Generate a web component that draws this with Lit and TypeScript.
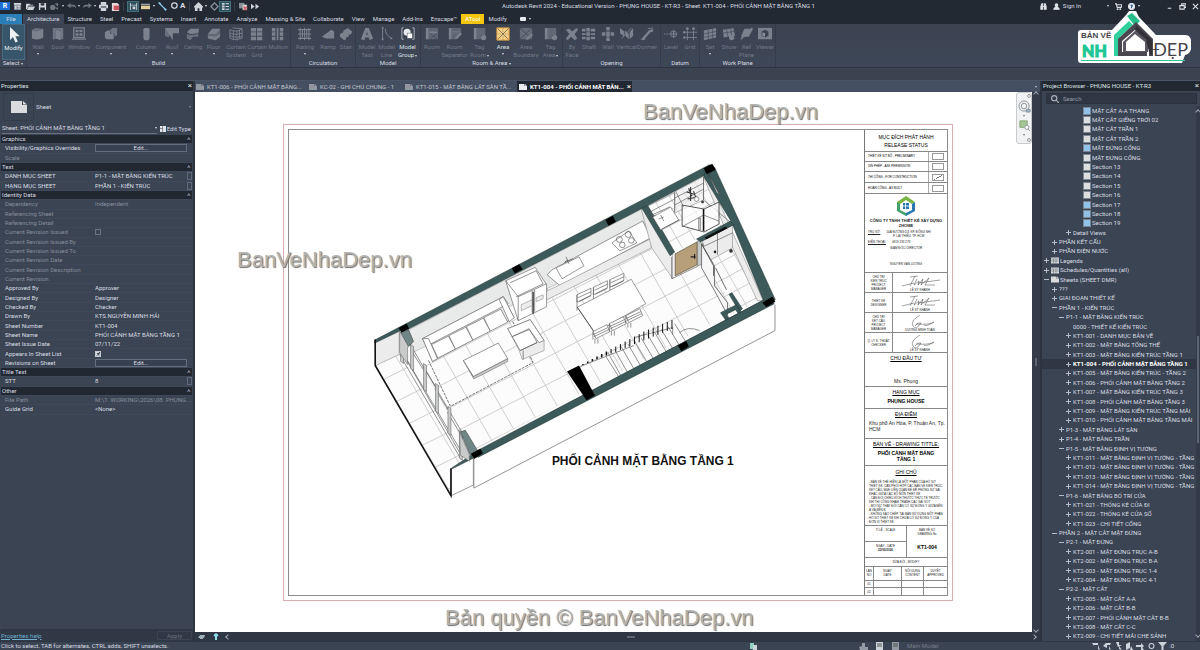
import { LitElement, html, svg, css, nothing } from "lit";
import { customElement } from "lit/decorators.js";
import { classMap } from "lit/directives/class-map.js";

type Tool = [label: string, width: number, icon: string, more?: boolean, live?: boolean];
type Prop = { k: string; v?: string; kind?: "head" | "edit" | "check" | "text" | "browse"; on?: boolean; dim?: boolean };
type Node = [level: number, mark: string, label: string];

const ICONS: Record<string, unknown> = {
  arrow: svg`<path d="M4 0v13l3-3 2.4 5.4 2.4-1L9.400 9.200h4.300z" fill="#eef1f4"/>`,
  wall: svg`<path d="M1 3q4 3 8 1l5-2v10q-6 4-13 1z"/><path d="M1 3l4-2 9 1-5 2q-4 2-8-1z" opacity=".7"/>`,
  door: svg`<path d="M2 1h12v13h-4V4L5 2v12H2z" opacity=".8"/><path d="M5 2l6 3v10l-6-2z"/>`,
  window: svg`<path d="M2 1h12v11H2z" fill="none" stroke="currentColor" stroke-width="1.500"/><path d="M4 3h3.500v3H4zM8.500 3H12v3H8.500zM4 7h3.500v3H4zM8.500 7H12v3H8.500zM0 13h16v1.500H0z"/>`,
  component: svg`<path d="M1 6l3-2h3v4h4v6H3l-2-2z"/><path d="M7 3l3-2h5v8l-3 2V8H8z" opacity=".8"/>`,
  column: svg`<rect x="5" y="1" width="7" height="14" rx="2.500"/><ellipse cx="8.500" cy="3" rx="3.500" ry="1.500" fill="#7d8490"/>`,
  roof: svg`<path d="M0 1h16v6H9v8z"/><path d="M0 1v9l4 2 2-4z" opacity=".7"/>`,
  ceiling: svg`<path d="M1 6l4-4h10l-1 5-9 1z"/><path d="M1 8l4 1 9-1v3l-6 0-3 4-4-2z" opacity=".7"/>`,
  floor: svg`<path d="M1 8l5-6h9v7l-6 5-8-2z" opacity=".6"/><path d="M1 8l5-6h9l-5 6z"/><path d="M1 10l9 1 5-3v3l-5 4-9-2z"/>`,
  mesh: svg`<path d="M1 3q7 4 14-1M1 7q7 3 14 0M1 10q7 3 14 1M1 3v10q7 3 14 0V2M5 4v11M9 4.500v11M12 3.500v10M4 1l11 1" fill="none" stroke="currentColor"/>`,
  cgrid: svg`<path d="M1 1h6v4H1zM8 1h6v4H8zM1 6h6v4H1zM8 6h6v4H8zM1 11h6v4H1zM8 11h6v4H8z"/>`,
  mullion: svg`<path d="M1 1h4v4H1zM10 1h4v4h-4zM1 6h4v4H1zM10 6h4v4h-4zM1 11h4v4H1zM10 11h4v4h-4z"/><path d="M6.500 1h2v14h-2z"/>`,
  railing: svg`<path d="M0 3h15M0 13h15M0 8h15M2.500 1v14M5 3v10M7.500 1v14M10 3v10M12.500 1v14" fill="none" stroke="currentColor" stroke-width="1.200"/>`,
  ramp: svg`<path d="M1 11L12 3l3 2v8H6z"/><path d="M1 11l11-8 1 3-8 6z" opacity=".6"/>`,
  stair: svg`<path d="M1 8l4-2V4l4-2 1-1 5 4-1 3-3 1v2l-3 1v2l-2 1-5-4z"/>`,
  mtext: svg`<path fill-rule="evenodd" d="M1 14L6 1h4l5 12-4 2-1-3H6l-1 3zM7 9h2L8 5z"/>`,
  mline: svg`<path d="M3 1v13M6 2q0 7 7 11" fill="none" stroke="currentColor" stroke-width="1.100"/><path d="M2 0h2v2H2zM2 13h2v2H2zM12 12h2v2h-2z"/>`,
  mgroup: svg`<path d="M3 1H1v13h2M13 1h2v13h-2" fill="none" stroke="#b9bec6"/><circle cx="7" cy="6" r="4" fill="#e8ebee"/><rect x="7" y="7" width="6" height="6" fill="#fff" stroke="#3d4555" stroke-width=".5"/>`,
  room: svg`<path d="M1 1h14v13H1z" opacity=".55"/><path d="M1 1h3v13H1zM5 5h9v2H5z"/><path d="M6 7l8 7M14 7l-8 7" stroke="#3d4555" stroke-width=".7"/>`,
  sep: svg`<path d="M1 1h14v7l-5 6H1z" opacity=".55"/><path d="M1 1h3v13H1zM5 5h9v1H5zM9 11l5-5 2 2-5 5-3 1z"/>`,
  tag: svg`<path d="M1 1h13v8H9v5H1z" opacity=".6"/><path d="M1 1h3v13H1zM10 10h5v3h-5z"/><circle cx="12" cy="12" r="3"/>`,
  area: svg`<rect x="1" y="1" width="14" height="14" fill="#f5cf83"/><path d="M1.500 1.500l13 13M14.500 1.500l-13 13" stroke="#5b5243" stroke-width=".8"/><path d="M8 1v14M1 8h14" stroke="#8a7a5c" stroke-width=".6" stroke-dasharray="2 1"/><path d="M1 1h14v14H1z" fill="none" stroke="#dd9d45" stroke-width="1"/>`,
  areab: svg`<path d="M1 1h14v13H1z" opacity=".65"/><path d="M1 1l14 13M15 1L1 14" stroke="#3d4555" stroke-width=".8"/><path d="M9 12l5-5 2 2-5 5-3 1z"/>`,
  face: svg`<path d="M1 3l4-1 3 3 5-4 2 2-4 5 3 5-3 2-4-4-4 4-2-2 4-5z"/>`,
  shaft: svg`<path d="M0 2h4v3H0zM5 1h4v4H5zM10 2h5v3h-5zM0 7h4v2H0zM5 6h4v4H5zM10 7h5v2h-5zM0 11h4v3H0zM5 11h4v4H5zM10 11h5v3h-5z"/>`,
  owall: svg`<path d="M6 0h4v4H6zM1 6h4v4H1zM6 5h4v6H6zM11 6h4v4h-4zM6 12h4v4H6z"/>`,
  vertical: svg`<path d="M0 1l5 4v6L0 7zM6 4l4 4v6l-4-4zM11 6l4-5v9l-4 4z"/><path d="M2 13L13 1" stroke="currentColor"/>`,
  dormer: svg`<path d="M2 13L10 4l5-2v3l-3 1-8 9z"/><path d="M1 14h5M9 2l6-1" stroke="currentColor"/>`,
  level: svg`<path d="M0 8h7" stroke="currentColor" stroke-dasharray="2 1"/><circle cx="11" cy="8" r="3.500" fill="none" stroke="currentColor"/><path d="M11 4v8M7 8h8" stroke="currentColor" stroke-width="1.400"/>`,
  grid: svg`<path d="M5 4v11M12 4v11M3 6h13M3 12h13" stroke="currentColor"/><circle cx="5" cy="2" r="1.600"/><circle cx="12" cy="2" r="1.600"/><circle cx="1.500" cy="6" r="1.500"/><circle cx="1.500" cy="12" r="1.500"/>`,
  set: svg`<path d="M1 4l14-3v11L1 15z"/><path d="M1 8l14-3M1 12l14-3M6 3v11M11 2v11" stroke="#3d4555" stroke-width=".7"/>`,
  show: svg`<path d="M1 3l12-2 2 9-13 2z"/><path d="M1 7l13-2M5 2l2 10M10 1l1 10" stroke="#3d4555" stroke-width=".7"/><circle cx="11" cy="12" r="3"/>`,
  ref: svg`<path d="M5 2h10l-5 9H1z"/><path d="M1 14L14 1" stroke="currentColor" stroke-width="1.500"/>`,
  viewer: svg`<path d="M0 1h16v13H0z"/><path d="M4 5l4-2 4 2v5l-4 2-4-2z" fill="#3d4555"/><path d="M5 6l3 1v4l-3-1z" fill="#8a909a"/>`,
};

const GROUPS: { title: string; more?: boolean; tools: Tool[] }[] = [
  { title: "Build", tools: [["Wall", 22, "wall", true], ["Door", 18, "door"], ["Window", 24, "window"], ["Component", 40, "component", true], ["Column", 30, "column", true], ["Roof", 22, "roof", true], ["Ceiling", 20, "ceiling"], ["Floor", 21, "floor", true], ["Curtain System", 24, "mesh"], ["Curtain Grid", 18, "cgrid"], ["Mullion", 24, "mullion"]] },
  { title: "Circulation", tools: [["Railing", 28, "railing", true], ["Ramp", 18, "ramp"], ["Stair", 18, "stair"]] },
  { title: "Model", tools: [["Model Text", 22, "mtext"], ["Model Line", 17, "mline"], ["Model Group", 25, "mgroup", true, true]] },
  { title: "Room & Area", more: true, tools: [["Room", 22, "room"], ["Room Separator", 23, "sep"], ["Tag Room", 27, "tag", true], ["Area", 20, "area", true, true], ["Area Boundary", 26, "areab"], ["Tag Area", 23, "tag", true]] },
  { title: "Opening", tools: [["By Face", 18, "face"], ["Shaft", 16, "shaft"], ["Wall", 22, "owall"], ["Vertical", 15, "vertical"], ["Dormer", 26, "dormer"]] },
  { title: "Datum", tools: [["Level", 20, "level"], ["Grid", 18, "grid"]] },
  { title: "Work Plane", tools: [["Set", 20, "set", true], ["Show", 18, "show"], ["Ref Plane", 17, "ref"], ["Viewer", 20, "viewer"]] },
];

const TABS = ["Structure", "Steel", "Precast", "Systems", "Insert", "Annotate", "Analyze", "Massing & Site", "Collaborate", "View", "Manage", "Add-Ins", "Enscape™"];

const PROPS: Prop[] = [
  { k: "Graphics", kind: "head" },
  { k: "Visibility/Graphics Overrides", kind: "edit" },
  { k: "Scale", dim: true },
  { k: "Text", kind: "head" },
  { k: "DANH MỤC SHEET", v: "P1-1 - MẶT BẰNG KIẾN TRÚC", kind: "browse" },
  { k: "HẠNG MỤC SHEET", v: "PHẦN 1 - KIẾN TRÚC", kind: "browse" },
  { k: "Identity Data", kind: "head" },
  { k: "Dependency", v: "Independent", dim: true },
  { k: "Referencing Sheet", dim: true },
  { k: "Referencing Detail", dim: true },
  { k: "Current Revision Issued", kind: "check", dim: true },
  { k: "Current Revision Issued By", dim: true },
  { k: "Current Revision Issued To", dim: true },
  { k: "Current Revision Date", dim: true },
  { k: "Current Revision Description", dim: true },
  { k: "Current Revision", dim: true },
  { k: "Approved By", v: "Approver", kind: "text" },
  { k: "Designed By", v: "Designer", kind: "text" },
  { k: "Checked By", v: "Checker", kind: "text" },
  { k: "Drawn By", v: "KTS.NGUYỄN MINH HẢI", kind: "text" },
  { k: "Sheet Number", v: "KT1-004", kind: "text" },
  { k: "Sheet Name", v: "PHỐI CẢNH MẶT BẰNG TẦNG 1", kind: "text" },
  { k: "Sheet Issue Date", v: "07/11/22", kind: "text" },
  { k: "Appears In Sheet List", kind: "check", on: true },
  { k: "Revisions on Sheet", kind: "edit" },
  { k: "Title Text", kind: "head" },
  { k: "STT", v: "8", kind: "browse" },
  { k: "Other", kind: "head" },
  { k: "File Path", v: "M:\\1. WORKING\\2026\\08. PHỤNG ...", dim: true },
  { k: "Guide Grid", v: "<None>", kind: "text" },
];

const TREE: Node[] = [
  [5, "b", "MẶT CẮT A-A THANG"], [5, "w", "MẶT CẮT GIẾNG TRỜI 02"], [5, "w", "MẶT CẮT TRẦN 1"], [5, "w", "MẶT CẮT TRẦN 2"],
  [5, "b", "MẶT ĐỨNG CỔNG"], [5, "w", "MẶT ĐỨNG CỔNG."], [5, "w", "Section 13"], [5, "w", "Section 14"], [5, "w", "Section 15"],
  [5, "w", "Section 16"], [5, "b", "Section 17"], [5, "b", "Section 18"], [5, "b", "Section 19"],
  [3, "+", "Detail Views"], [1, "+", "PHẦN KẾT CẤU"], [1, "+", "PHẦN ĐIỆN NƯỚC"],
  [0, "+l", "Legends"], [0, "+q", "Schedules/Quantities (all)"], [0, "-s", "Sheets (SHEET DMR)"],
  [1, "+", "???"], [1, "+", "GIAI ĐOẠN THIẾT KẾ"], [1, "-", "PHẦN 1 - KIẾN TRÚC"], [2, "-", "P1-1 - MẶT BẰNG KIẾN TRÚC"],
  [3, "", "0000 - THIẾT KẾ KIẾN TRÚC"], [3, "+", "KT1-001 - DANH MỤC BẢN VẼ"], [3, "+", "KT1-002 - MẶT BẰNG TỔNG THỂ"],
  [3, "+", "KT1-003 - MẶT BẰNG KIẾN TRÚC TẦNG 1"], [3, "+", "KT1-004 - PHỐI CẢNH MẶT BẰNG TẦNG 1"],
  [3, "+", "KT1-005 - MẶT BẰNG KIẾN TRÚC - TẦNG 2"], [3, "+", "KT1-006 - PHỐI CẢNH MẶT BẰNG TẦNG 2"],
  [3, "+", "KT1-007 - MẶT BẰNG KIẾN TRÚC TẦNG 3"], [3, "+", "KT1-008 - PHỐI CẢNH MẶT BẰNG TẦNG 3"],
  [3, "+", "KT1-009 - MẶT BẰNG KIẾN TRÚC TẦNG MÁI"], [3, "+", "KT1-010 - PHỐI CẢNH MẶT BẰNG TẦNG MÁI"],
  [2, "+", "P1-3 - MẶT BẰNG LÁT SÀN"], [2, "+", "P1-4 - MẶT BẰNG TRẦN"], [2, "-", "P1-5 - MẶT BẰNG ĐỊNH VỊ TƯỜNG"],
  [3, "+", "KT1-011 - MẶT BẰNG ĐỊNH VỊ TƯỜNG - TẦNG"], [3, "+", "KT1-012 - MẶT BẰNG ĐỊNH VỊ TƯỜNG - TẦNG"],
  [3, "+", "KT1-013 - MẶT BẰNG ĐỊNH VỊ TƯỜNG - TẦNG"], [3, "+", "KT1-014 - MẶT BẰNG ĐỊNH VỊ TƯỜNG - TẦNG"],
  [2, "-", "P1-6 - MẶT BẰNG BỐ TRÍ CỬA"], [3, "+", "KT1-021 - THỐNG KÊ CỬA ĐI"], [3, "+", "KT1-022 - THỐNG KÊ CỬA SỔ"], [3, "+", "KT1-023 - CHI TIẾT CỔNG"],
  [1, "-", "PHẦN 2 - MẶT CẮT MẶT ĐỨNG"], [2, "-", "P2-1 - MẶT ĐỨNG"], [3, "+", "KT2-001 - MẶT ĐỨNG TRỤC A-B"], [3, "+", "KT2-002 - MẶT ĐỨNG TRỤC B-A"],
  [3, "+", "KT2-003 - MẶT ĐỨNG TRỤC 1-4"], [3, "+", "KT2-004 - MẶT ĐỨNG TRỤC 4-1"], [2, "-", "P2-2 - MẶT CẮT"],
  [3, "+", "KT2-005 - MẶT CẮT A-A"], [3, "+", "KT2-006 - MẶT CẮT B-B"], [3, "+", "KT2-007 - PHỐI CẢNH MẶT CẮT B-B"], [3, "+", "KT2-008 - MẶT CẮT C-C"],
  [3, "+", "KT2-009 - CHI TIẾT MÁI CHE SẢNH"],
];

const sheetIcon = html`<svg class="pg" viewBox="0 0 16 12"><path d="M0 0h11v4h5v8H0z"/><path d="M12 0l4 3.500h-4z"/></svg>`;

/* ---------- floor plan drawing ---------- */

@customElement("plan-drawing")
export class PlanDrawing extends LitElement {
  static styles = css`
    :host { display: block; min-width: 0; min-height: 0; }
    svg { display: block; width: 100%; height: 100%; }
    .teal { fill: #3d5a5a; stroke: #1d2f2f; stroke-width: .5; }
    .black { fill: #000; }
    .floor { fill: #fcfcfc; stroke: none; }
    .tile { stroke: #bcbcbc; stroke-width: .7; fill: none; }
    .ln { stroke: #4c4c4c; stroke-width: .6; fill: none; }
    .thin { stroke: #444; stroke-width: .8; fill: none; }
    .obj { stroke: #555; stroke-width: .6; fill: #fff; }
    .shade { stroke: #777; stroke-width: .5; fill: #ececec; }
    .deep { stroke: #555; stroke-width: .5; fill: #c9cbcb; }
    .rug { stroke: #555; stroke-width: .8; fill: none; stroke-dasharray: 3 1; }
    .door { fill: #b79f79; stroke: #564a36; stroke-width: .7; }
    .bold { stroke: #111; stroke-width: 1.600; fill: none; }
    .title { font: bold 12px "Liberation Sans", Arial, sans-serif; fill: #111; }
  `;

  private tiles(x: number, y: number, u: number[], v: number[], n: number) {
    const out = [];
    for (let i = -n; i <= n; i++) {
      out.push(svg`<line x1=${x + u[0] * i - v[0] * 30} y1=${y + u[1] * i - v[1] * 30} x2=${x + u[0] * i + v[0] * 30} y2=${y + u[1] * i + v[1] * 30}/>`);
      out.push(svg`<line x1=${x + v[0] * i - u[0] * 30} y1=${y + v[1] * i - u[1] * 30} x2=${x + v[0] * i + u[0] * 30} y2=${y + v[1] * i + u[1] * 30}/>`);
    }
    return out;
  }

  render() {
    const chairsA = [0, 1, 2].map((i) => {
      const x = 577 + i * 16.500, y = 294 - i * 7.500;
      return svg`<path class="obj" d="M${x} ${y}l14-6.500v7l-14 7z"/><path class="ln" d="M${x + 1} ${y + 3}l13-6M${x} ${y}v16M${x + 2} ${y + 7}l12-6"/>`;
    });
    const chairsB = [0, 1, 2].map((i) => {
      const x = 593 + i * 16.500, y = 331 - i * 8;
      return svg`<path class="obj" d="M${x} ${y}l14-7 3 7-14 7z"/><path class="ln" d="M${x} ${y + 3}l15-7M${x + 2} ${y + 7}v5M${x} ${y}v8M${x + 5} ${y + 7}v5M${x + 1} ${y + 5}l15-7"/>`;
    });
    const steps = [...Array(11)].map((_, i) => {
      const x = 608 + i * 6.700, y = 352 - i * 2.900;
      return svg`<path class="ln" d="M${x} ${y}l${13 - i * 0.2} ${23 - i * 0.5}"/>`;
    });
    const rails = [...Array(20)].map((_, i) => {
      const x = 583 + i * 4.700, y = 364.500 - i * 1.900, h = Math.min(9, 1 + i * 0.600);
      return svg`<path d="M${x} ${y}v${-h}" stroke="#111" stroke-width=${i > 5 ? 1 : 1.5}/>`;
    });
    const posts = [[400, 334, 27], [410, 344, 24], [423, 363, 26], [435, 383, 28], [447.500, 406, 27], [459, 430, 28]];
    return html`<svg viewBox="288 129 577 466" preserveAspectRatio="xMidYMid meet" role="img" aria-label="PHỐI CẢNH MẶT BẰNG TẦNG 1">
      <defs>
        <clipPath id="main"><path d="M412 350L642 222L646 240 672 276 705 260 736 310 470 452z"/></clipPath>
        <clipPath id="terrace"><path d="M375 365L399 354 468 462 451 470 451 495z"/></clipPath>
        <clipPath id="bath"><path d="M648 206L704 176 732 222 700 236 670 256z"/></clipPath>
        <clipPath id="utility"><path d="M703 262L733 246 761 300 728 315z"/></clipPath>
        <linearGradient id="soft" x1="0" y1="0" x2="1" y2="1"><stop offset="0" stop-color="#fafafa"/><stop offset="1" stop-color="#d5d7d7"/></linearGradient>
      </defs>
      <path class="ln" d="M775.700 304V330L473.500 488V455"/>
      <path class="floor" d="M375 365L399 354 641 222 704 176 763 301 470 454 451 495z"/>
      <g class="tile" clip-path="url(#main)">${this.tiles(489.3, 386.7, [22, -11.4], [12, 21], 24)}</g>
      <g class="tile" clip-path="url(#terrace)">${this.tiles(396, 401, [20, -10], [13, 22], 10)}</g>
      <g class="tile" clip-path="url(#bath)">${this.tiles(690, 230, [13, -7], [7, 12], 12)}</g>
      <g class="tile" clip-path="url(#utility)">${this.tiles(730, 275, [13, -7], [8, 14], 12)}</g>

      <path d="M407 330L642 208 652 226V238L412 352z" fill="url(#soft)" stroke="#888" stroke-width=".4"/>
      <path class="shade" d="M374.500 342L398.500 330V354L375 365z"/>
      <path class="teal" d="M374 339.500L710 163.500 714 168 704 174.500 646 205.500 408 328.500 398 331 374 342.500z"/>
      <path class="shade" d="M704 176L709 178 764 300 758 300 733 246 720 214z"/>
      <path class="teal" d="M706 170L715 166 776 299 765 302 732 221 704 175z"/>
      <path d="M709 173l11 21-3-3z" fill="#fff" stroke="#333" stroke-width=".5"/>

      <path class="obj" d="M547 274L552 269 643 220 651 237 560 285z"/>
      <path class="shade" d="M558 285L651.500 237.500V247L545 300V291z"/>
      <path class="obj" d="M556 267l23-11 5 9-22 13z"/><path class="ln" d="M564 262l4-3m-2-3l3 7m-4-2l8-3"/>
      <path class="obj" d="M612 242l17-12 8 12-17 8z"/>
      <g class="ln"><circle cx="619.500" cy="238.500" r="3"/><circle cx="628.500" cy="233.500" r="3"/><circle cx="622.500" cy="244" r="2.800"/><circle cx="631.500" cy="239.500" r="2.800"/></g>

      <path class="shade" d="M641.700 209L646 207 673 254V278L652 247z"/>
      <path class="teal" d="M642 207L648 204.500 675 251 670.500 255z"/>
      <path class="shade" d="M648 205L704 175.500V199L675 212V192z" fill-opacity=".6"/>
      <path class="ln" d="M675 191v20M648 212l27-14M648 218l8-4M675 197l29-15M675 204l29-16M704 176v23l28 23M652 214l8 14 16-8-6-14z"/>
      <path class="obj" d="M653 216l18-10 8 13-18 10z"/><path class="ln" d="M661 214l3 6m-5-2l5-2M662 228l18-9"/>
      <path d="M689 187l3 8M687 191l7 2M688 198l10-2M691 186v14M694 190l2 6" stroke="#333" stroke-width="1.100"/>
      <circle class="obj" cx="697" cy="198" r="2.300"/><circle cx="703" cy="201" r="1.500" fill="#444"/>
      <path d="M682.500 204l22 4 15-7v22l-15 8-22-6z" fill="#fff" fill-opacity=".7" stroke="#333" stroke-width=".8"/>
      <path class="bold" stroke-width="1.200" d="M704 208v22"/><path class="deep" d="M699 217h2v12h-2z"/><path class="ln" d="M682 226l22-12 15 6M676 190l8 16"/>
      <path class="shade" d="M703 237L733 224V247L704 263z"/><path class="ln" d="M718 231v23M703 246l30-14"/>
      <path class="teal" d="M697 238L731 220 734 224 701 241z"/><path d="M705 236.500l21-11 2 1.800-21 11z" fill="#111"/>
      <path class="door" d="M675.500 253L697.500 241V264L675.500 275z"/><path class="ln" d="M672 256v22l27-13"/><path d="M691 256h5m-1-3v5" stroke="#222" stroke-width="1.200"/>
      <path class="deep" d="M698 240l6 3v20l-6 2z"/>
      <path d="M702 243L715 265V285L728 302V314L715 290 702 267z" fill="#f7f7f7" stroke="#444" stroke-width=".7"/><path class="thin" d="M702 243l12 22v10M716 267l11 22"/>
      <circle cx="715.500" cy="251" r="1.300" fill="#222"/><circle cx="731.500" cy="250" r="1.800" fill="#333"/>
      <path class="teal" d="M729.500 293.500L732.500 292 743 308 740 311z"/>
      <path class="teal" fill-rule="evenodd" d="M721 312L737 304 743 314 728 322zM727 313.500l9-4.500 3 4-9 5z"/>

      <path class="shade" d="M422 338L503 296 514 317 432 361z"/>
      <path class="obj" d="M422 338L503 296 508 303 428 344.500z"/>
      ${[0, 1, 2, 3].map((i) => svg`<path class="obj" d="M${431 + i * 17.5} ${344 - i * 9}l17-8.500 7 13-17.500 9z"/>`)}
      <path class="obj" d="M422 338l6 0 9 20-5 3zM499 299l4-3 11 21-5 4z"/>
      <path class="rug" d="M428 360L450 406 533 362 512 320"/>
      <path class="deep" d="M463 360L473.500 378.500 507.500 361V358L473 376z"/>
      <path class="obj" d="M463 360L498 342.500 507.500 358 473 376z"/>
      <path class="obj" d="M505.500 280L535 266.500 546.500 284V306L518 320z"/><path class="ln" d="M518 296L546.500 283M505.500 280L518 296V320M510 282l26-12 7 13-27 13M532 290v22M534.500 289v22"/>
      <path class="shade" d="M521 304l11-5v6l-11 5zM536 297l7-3v4l-7 3z"/><path d="M533 291v22" stroke="#222" stroke-width="1.200"/>
      <path class="shade" d="M507.500 328L530 319 544 340V350L522 359 519 350z"/>
      <path class="obj" d="M507.500 328L530 319 544 340 539 342 529 329 512 336zM512 336l17-8 8 14-17 8z"/><path class="ln" d="M520 350l17-8M523 350v9"/>

      ${chairsA}
      <path class="obj" d="M577.300 306.500L631.500 278.500 646 303 595 332.500z"/><path class="thin" d="M577.300 306.500L595 332.500"/>
      ${chairsB}
      ${steps}
      <path class="ln" d="M634 337L673 327V334M580 366L634 345M680 332q8-7 20-2M606 356l14 22"/>${rails}

      <path class="teal" d="M451 468L472 454 763 300 768 304 774 303 594 396 451 470z"/>
      <path class="teal" d="M472 453L764 299.500 775 303 478 457z"/>
      <path class="obj" d="M451 469L473 458V485L451 495.500z"/>
      <path class="ln" d="M399 354L460 458M402 352L463 455M409 343L461 431M410 349L424 371M423 366l12 20M435 389l12 20M447 412l12 20M404 356l55 96"/>
      ${posts.map(([x, y, h]) => svg`<path class="deep" d="M${x} ${y}l3 2v${h}l-3-2z"/>`)}
      <path class="deep" d="M399 332l8-3 5 12-5 5v18l-8-12z"/><path d="M400 332l8-3 5 12-5 5z" fill="#708686" stroke="#333" stroke-width=".5"/>
      <path class="deep" d="M459 432l10 22v7l-9-6z"/><path d="M460 431.500l5-1.500 12 20-7 5z" fill="#708686" stroke="#333" stroke-width=".5"/>
      <path class="bold" d="M374.500 339V365L450.500 495.500V468"/>
      <g class="black">
        <path d="M398 327.500l8-4.500 2.500 5-7.500 4z"/><path d="M511.500 267.500l7.500-4 3.500 5-8 4.200z"/><path d="M605.500 219l7.500-4.200 3 6-7.300 4z"/>
        <path d="M704 167l8.700-4.500 3.500 6-9 4.500z"/><path d="M763 302l10-6 3 5-9 5.200z"/><path d="M678 345l8.700-4.500 2.500 5.500-7.500 4.700z"/>
        <path d="M567 371l12-6 16 30-8.500 5z"/><path d="M470.500 453.500l9.500-5 2.500 4.500-8.500 5.500z"/>
      </g>
      <text class="title" x="643" y="465" text-anchor="middle">PHỐI CẢNH MẶT BẰNG TẦNG 1</text>
    </svg>`;
  }
}

/* ---------- drawing title block ---------- */

@customElement("title-block")
export class TitleBlock extends LitElement {
  static styles = css`
    :host { display: flex; flex-direction: column; font: 4px/5px "Liberation Sans", Arial, sans-serif; color: #222; text-align: center; border-left: 1px solid #777; box-sizing: border-box; }
    .row { display: grid; border-bottom: 1px solid #888; box-sizing: border-box; align-items: center; }
    .big { font-size: 5px; line-height: 8px; height: 22px; color: #000; }
    .st { grid-template-columns: 1fr 19px; height: 11px; text-align: left; white-space: nowrap; }
    .st:nth-child(-n + 3) { height: 10px; }
    .st span { padding-left: 3px; font-size: 3px; color: #000; }
    .st label { display: grid; place-items: center; height: 100%; border-left: 1px solid #aaa; }
    .st input { appearance: none; margin: 0; width: 12px; height: 7px; border: 1px solid #999; border-radius: 0; }
    .st input:checked { background: linear-gradient(150deg, transparent 46%, #777 47%, #777 54%, transparent 55%); }
    .firm { height: 79px; align-content: start; justify-items: center; gap: 2px; }
    .firm svg { width: 22px; height: 22px; }
    .firm b { line-height: 5px; }
    .firm p { margin: 0; padding-left: 3px; font-size: 3px; line-height: 4px; display: flex; gap: 6px; justify-self: stretch; }
    .role { margin-top: 10px; }
    .tiny { font-size: 3px; line-height: 4px; }
    .sign { grid-template-columns: 27px 1fr; height: 20px; }
    .sign > span { font-size: 3px; line-height: 4px; }
    .sign > div { border-left: 1px solid #888; height: 100%; display: flex; flex-direction: column; justify-content: flex-end; align-items: center; font-size: 3px; line-height: 4px; }
    .sign svg { width: 48px; height: 13px; fill: none; stroke: #444; stroke-width: .5; }
    .sec { align-content: start; padding-top: 2px; }
    h4 { margin: 0; font: 5px/7px "Liberation Sans", Arial, sans-serif; text-decoration: underline; color: #000; }
    .txt { font-size: 5px; line-height: 6px; }
    .b { font-weight: bold; color: #000; }
    .owner { height: 34px; align-content: space-between; padding-bottom: 2px; }
    .item { height: 22px; gap: 2px; }
    .place { height: 30px; gap: 2px; }
    .left { text-align: left; padding-left: 4px; }
    .name { height: 27px; gap: 2px; white-space: nowrap; justify-content: center; }
    .notes { flex: 1; gap: 4px; text-align: left; padding: 3px 4px 0; overflow: hidden; }
    .notes h4 { text-align: center; }
    .notes p { margin: 0; font-size: 3px; line-height: 4px; }
    .meta { grid-template-columns: 1fr 1fr; height: 32px; align-items: stretch; }
    .meta > div { display: grid; grid-template-rows: 1fr 1fr; font-size: 3px; line-height: 4px; }
    .meta > div + div { border-left: 1px solid #888; }
    .meta .one { border-bottom: 1px solid #888; }
    .meta .pad { padding-top: 2px; }
    .no { font-size: 5px; font-weight: bold; line-height: 10px; color: #000; }
    .cap { height: 9px; font-size: 3px; }
    table { border-collapse: collapse; width: 100%; height: 28px; font-size: 3px; line-height: 4px; table-layout: fixed; }
    td, th { border: 1px solid #888; border-width: 0 1px 1px 0; padding: 0; font-weight: normal; }
    tr > :last-child { border-right: 0; }
    tr:last-child > td { border-bottom: 0; }
    .c1 { width: 8px; } .c2 { width: 27px; } .c3 { width: 21px; }
  `;
  private sig(a: boolean) {
    return a
      ? svg`<path d="M6 11l12-3M14 2l8-1M19 1l-5 10M21 4l-3 6 5-4-1 4 5-6-2 6 8-7-4 7h10"/><path d="M22 8l22-3"/>`
      : svg`<path d="M24 0q-10 6-7 11t8-3q-4-1-6 3M20 9q14 1 18-2-8 5-10 3"/>`;
  }
  render() {
    const st: [string, boolean][] = [["THIẾT KẾ SƠ BỘ - PRELIMINARY", false], ["XIN PHÉP - ASK PERMISSION", false], ["THI CÔNG - FOR CONSTRUCTION", true], ["HOÀN CÔNG - AS BUILT", false]];
    const sg: [unknown, string, boolean][] = [
      [html`CHỦ TRÌ<br />KIẾN TRÚC<br />PROJECT<br />MANAGER`, "LÊ SỸ KHÁNH", true],
      [html`THIẾT KẾ<br />DESIGNER`, "LÊ SỸ KHÁNH", true],
      [html`CHỦ TRÌ<br />KẾT CẤU<br />PROJECT<br />MANAGER`, "DƯƠNG MINH TOẢN", false],
      [html`Q. LÝ K. THUẬT<br />CHECKER`, "LÊ SỸ KHÁNH", false],
    ];
    return html`
      <div class="row big"><div>MỤC ĐÍCH PHÁT HÀNH<br />RELEASE STATUS</div></div>
      ${st.map(([t, on], i) => html`<div class="row st"><span id="s${i}">${t}</span><label><input type="checkbox" aria-labelledby="s${i}" .checked=${on} /></label></div>`)}
      <div class="row firm">
        <svg viewBox="0 0 22 22"><path d="M2 8l9-6 9 6-3 2-6-4-6 4v5l-3-2z" fill="#79b543"/><path d="M2 8l3 2v6l6 3v3L2 17z" fill="#42a06b"/><path d="M20 8l-3 2v6l-6 3v3l9-5z" fill="#2778b5"/><path d="M8 9h6v6H8z" fill="#2778b5"/><path d="M10.500 9v6M8 12h6" stroke="#fff" stroke-width=".8"/></svg>
        <b>CÔNG TY TNHH THIẾT KẾ XÂY DỰNG<br />ZHOME</b>
        <p><u>TRỤ SỞ:</u><span>54A ĐƯỜNG D3, KP. ĐÔNG NHÌ<br />P. LÁI THIÊU, TP. HCM</span></p>
        <p><u>ĐIỆN THOẠI:</u><span>0919 233 278</span></p>
        <span class="tiny">GIÁM ĐỐC/ DIRECTOR</span>
        <span class="tiny role">NGUYỄN VĂN LƯƠNG</span>
      </div>
      ${sg.map(([r, n, a]) => html`<div class="row sign"><span>${r}</span><div><svg viewBox="0 0 48 13">${this.sig(a)}</svg>${n}</div></div>`)}
      <div class="row sec owner"><h4>CHỦ ĐẦU TƯ</h4><div class="txt">Ms. Phụng</div></div>
      <div class="row sec item"><h4>HẠNG MỤC</h4><div class="txt b">PHỤNG HOUSE</div></div>
      <div class="row sec place"><h4>ĐỊA ĐIỂM</h4><div class="txt left">Khu phố An Hòa, P. Thuận An, Tp. HCM</div></div>
      <div class="row sec name"><h4>BẢN VẼ - DRAWING TITTLE:</h4><div class="txt b">PHỐI CẢNH MẶT BẰNG<br />TẦNG 1</div></div>
      <div class="row sec notes"><h4>GHI CHÚ</h4><p>- BẢN VẼ THỂ HIỆN LÀ MỘT PHẦN CỦA HỒ SƠ THIẾT KẾ. CẦN PHỐI HỢP CÁC BẢN VẼ KIẾN TRÚC, KẾT CẤU, M&amp;E LIÊN QUAN ĐỂ ĐỀ PHÒNG SỰ SAI KHÁC GIỮA CÁC BỘ MÔN THIẾT KẾ<br />- CẦN ĐỐI CHIẾU KÍCH THƯỚC THỰC TẾ TRƯỚC KHI THI CÔNG NHẰM TRÁNH CÁC SAI SÓT<br />- MỌI SỰ THAY ĐỔI CẦN CÓ SỰ ĐỒNG Ý GIỮA BÊN A VÀ BÊN B<br />- KHÔNG SAO CHÉP, TÁI BẢN SỬ DỤNG MỘT PHẦN HỒ SƠ THIẾT KẾ KHI CHƯA CÓ SỰ ĐỒNG Ý CỦA ĐƠN VỊ THIẾT KẾ</p></div>
      <div class="row meta">
        <div><div class="one pad">TỈ LỆ - SCALE</div><div class="pad">NGÀY - DATE<br /><b>22/05/2026</b></div></div>
        <div><div class="pad">BẢN VẼ SỐ<br />DRAWING No</div><div class="no">KT1-004</div></div>
      </div>
      <div class="row cap">SỬA ĐỔI - MODIFY</div>
      <table>
        <tr><th class="c1">LẦN<br />NO</th><th class="c2">NGÀY<br />DATE</th><th class="c3">NỘI DUNG<br />CONTENT</th><th>DUYỆT<br />APPROVED</th></tr>
        <tr><td>01</td><td></td><td></td><td></td></tr>
        <tr><td>02</td><td></td><td></td><td></td></tr>
      </table>`;
  }
}

/* ---------- application window ---------- */

@customElement("app-root")
export class AppRoot extends LitElement {
  static styles = css`
    :host { display: grid; grid-template-rows: 14px 10px 44px 13px 1fr 9px; height: 100vh; overflow: hidden; position: relative; background: #3b4453; color: #d8dce2; font: 6px/8px "Roboto", "Open Sans", sans-serif; }
    * { box-sizing: border-box; }
    button, input, select { font: inherit; color: inherit; background: none; border: 0; margin: 0; padding: 0; border-radius: 0; min-width: 0; }
    button { white-space: nowrap; }
    svg { display: block; }
    a { color: #6fb0cf; }

    .top { background: #222933; display: grid; grid-template-columns: 502px 1fr auto; align-items: center; padding-bottom: 2px; }
    .quick { display: flex; align-items: center; gap: 3px; }
    .quick button { height: 9px; display: grid; place-items: center; }
    .quick svg { width: 9px; height: 9px; fill: #cfd4da; stroke: none; }
    .quick .dim svg { opacity: .45; }
    .quick .box { background: #2c4f5c; outline: 1px solid #41707d; }
    .quick b { font-size: 8px; }
    .caret { width: 0; height: 0; border: 1px solid transparent; border-top: 2px solid currentColor; border-bottom: 0; display: inline-block; }
    .bar { width: 1px; height: 9px; background: #39414d; margin: 0 1px; }
    .logo { background: #1d6fd6; color: #fff; font-weight: bold; width: 10px; text-align: center; font-size: 7px; }
    .doc { white-space: nowrap; }
    .acct { display: flex; align-items: center; gap: 6px; padding-right: 1px; }
    .acct button { display: flex; gap: 3px; align-items: center; height: 9px; }
    .acct svg { width: 7px; height: 7px; fill: none; stroke: #dfe3e8; stroke-width: 1.200; }
    .acct .gap { width: 14px; }

    .tabs { background: #222933; display: flex; align-items: stretch; }
    .tabs button { padding: 0 4px; line-height: 10px; }
    .tabs .file { background: #2a7fb8; width: 22px; margin-right: 1px; padding: 0; }
    .tabs .on { background: #3d4555; }
    .tabs .gold { background: #f3c70f; color: #fff; }
    .tabs .cam { display: flex; align-items: center; gap: 3px; padding-left: 9px; }
    .tabs .cam i { width: 6px; height: 4px; background: #e6e9ed; border-radius: 1px; }

    .ribbon { background: linear-gradient(#3b4351, #3e4757); display: flex; border-bottom: 1px solid #2d3440; }
    .select { width: 27px; border-right: 1px solid #343c49; display: flex; flex-direction: column; justify-content: space-between; padding: 1px 2px 0 3px; }
    .modify { background: #38566b; outline: 1px solid #47687e; height: 34px; width: 21px; display: flex; flex-direction: column; align-items: center; padding-top: 2px; gap: 1px; color: #f0f2f4; }
    .select .foot { padding-left: 0; text-align: left; }
    .group { display: flex; flex-direction: column; justify-content: space-between; border-right: 1px solid #343c49; }
    .tools { display: flex; padding-top: 3px; }
    .tool { display: flex; flex-direction: column; align-items: center; color: #717987; line-height: 8px; overflow: visible; gap: 2px; }
    .tool span { display: block; white-space: pre; text-align: center; }
    .tool svg, .modify svg { width: 16px; height: 14px; fill: currentColor; flex: none; }
    .modify svg { height: 16px; }
    .tool svg { color: #7b828e; }
    .tool.live { color: #dde1e6; }
    .tool .caret { color: #d3d8df; }
    .tool span .caret { margin-left: 1px; }
    .foot { text-align: center; height: 8px; line-height: 8px; }

    .options { background: #3b4351; border-bottom: 1px solid #4a5467; }
    .main { display: grid; grid-template-columns: 193px 1fr 158px; gap: 2px; background: #2d3440; min-height: 0; }
    .bar-title { background: #222832; height: 10px; display: flex; justify-content: space-between; align-items: center; padding: 0 1px; color: #dfe3e8; }
    .x { font-size: 8px; line-height: 8px; }

    .props { display: grid; grid-template-rows: 10px 31px 13px 1fr 11px; min-height: 0; background: #3b4453; }
    .type { display: flex; align-items: center; gap: 2px; padding: 1px 2px 1px 3px; }
    .thumb { width: 31px; height: 28px; border: 1px solid #353d4a; display: grid; place-items: center; }
    .pg { fill: #d9dbde; width: 16px; height: 12px; }
    .type .caret { margin-left: auto; color: #8a92a0; }
    .filter { display: flex; align-items: center; gap: 3px; padding: 0 2px; }
    .filter label { flex: 1; display: flex; align-items: center; border-bottom: 1px solid #667080; height: 11px; }
    .filter select { appearance: none; flex: 1; height: 9px; }
    .filter button { display: flex; align-items: center; gap: 1px; }
    .filter svg { width: 6px; height: 6px; fill: #e0e3e8; }
    .ptable { display: grid; grid-template-rows: repeat(53, minmax(0, 1fr)); border-spacing: 0; margin: 0 1px; background: #3b4453; border-bottom: 1px solid #2f3643; min-height: 0; }
    .ptable tbody { display: contents; }
    .ptable tr { display: grid; grid-template-columns: 92px 1fr 5px; align-items: center; border-bottom: 1px solid #3f4858; min-height: 0; }
    .ptable th, .ptable td { padding: 0; text-align: left; font-weight: normal; white-space: nowrap; display: flex; align-items: center; height: 100%; min-height: 0; min-width: 0; line-height: 8px; }
    .ptable th { padding-left: 4px; }
    .ptable td { padding-left: 2px; }
    .ptable .head { background: #222832; grid-template-columns: 1fr 5px; }
    .ptable .head th { padding-left: 1px; }
    .ptable .dim { color: #868e9b; }
    .ptable input[type="text"] { width: 100%; height: 8px; line-height: 8px; }
    .ptable .edit { border: 1px solid #636d7d; width: 92px; height: 8px; line-height: 6px; background: #36404e; }
    .ptable td.end { padding: 0; }
    .browse { border: 1px solid #606a7a; width: 5px; height: 8px; }
    .ptable input[type="checkbox"] { appearance: none; width: 6px; height: 6px; border: 1px solid #6b7482; }
    .ptable input[type="checkbox"]:checked { background: linear-gradient(135deg, #d9dde2 50%, #a9b0ba 50%); border-color: #c7ccd3; position: relative; }
    .ptable input[type="checkbox"]:checked::after { content: ""; position: absolute; left: 1px; top: 0; width: 2px; height: 1px; border: solid #303846; border-width: 0 0 1px 1px; transform: rotate(-45deg); }
    .help { background: #303745; display: flex; align-items: center; justify-content: space-between; padding: 0 1px; }
    .help button { width: 35px; height: 9px; line-height: 7px; border: 1px solid #3d4554; color: #69717e; border-radius: 1px; }

    .view { display: grid; grid-template-rows: 11px 1fr 9px; grid-template-columns: 1fr 8px; min-width: 0; min-height: 0; }
    .vtabs { grid-column: 1 / -1; background: #454f62; display: grid; grid-template-columns: 113px 96px 113px 115px 1fr; align-items: stretch; color: #c0c6cf; }
    .vtabs button { display: flex; align-items: center; gap: 3px; padding-left: 1px; }
    .vtabs .pg { width: 8px; height: 6px; fill: #9298a2; }
    .vtabs .on { background: #222832; color: #fff; font-weight: bold; padding-left: 2px; }
    .vtabs .on .pg { fill: #e9ebee; }
    .vtabs .x { font-weight: normal; }
    .vtabs .caret { justify-self: end; align-self: center; margin-right: 3px; }
    .canvas { background: #fff; position: relative; padding: 32px 79px 31px 88px; min-height: 0; display: grid; }
    .sheet { border: 1px solid #d8aeb2; padding: 4px; display: grid; min-height: 0; }
    .inner { border: 1px solid #8c8c8c; display: grid; grid-template-columns: 1fr 83px; grid-template-rows: minmax(0, 1fr); min-height: 0; }
    .mark { position: absolute; font: 22px/26px "Liberation Sans", Arial, sans-serif; color: #b3b3af; text-shadow: 1px 1px 1px #6d6d6d; white-space: nowrap; }
    .m1 { left: 448px; top: 7px; } .m2 { left: 42px; top: 155px; } .m3 { left: 250px; bottom: 1px; }
    .nav { position: absolute; right: 0; top: 0; width: 16px; height: 52px; border: 1px solid #c8cacd; border-radius: 3px; background: #f1f2f3; display: flex; flex-direction: column; align-items: center; justify-content: space-between; color: #777; padding: 1px 0; }
    .nav svg { width: 13px; height: 13px; fill: none; stroke: #8c9297; }
    .nav .nub { width: 4px; height: 4px; border: 1px solid #999; border-radius: 50%; align-self: flex-end; }
    .vs { background: #343b49; display: flex; flex-direction: column; justify-content: space-between; align-items: center; color: #9da5b1; }
    .hs { grid-column: 1 / -1; background: #303744; display: flex; align-items: center; justify-content: space-between; padding: 0 4px 0 3px; color: #9da5b1; }
    .hs span { display: flex; gap: 6px; align-items: center; }
    .hs svg { width: 8px; height: 7px; fill: #9fb1bd; }
    .hs .thumbx { width: 8px; height: 2px; background: #5c6573; }
    .vs .thumby { width: 2px; height: 8px; background: #5c6573; }
    .chev { width: 4px; height: 4px; border: solid currentColor; border-width: 1px 1px 0 0; transform: rotate(-45deg); }
    .chev.down { transform: rotate(135deg); } .chev.right { transform: rotate(45deg); } .chev.left { transform: rotate(-135deg); }

    .browser { display: grid; grid-template-rows: 10px 15px minmax(0, 1fr); background: #3b4453; min-height: 0; min-width: 0; }
    .search { margin: 2px 3px 2px 4px; background: #303744; border: 1px solid #2b323e; display: flex; align-items: center; gap: 4px; padding: 0 4px; }
    .search svg { width: 8px; height: 8px; fill: none; stroke: #aab1bb; stroke-width: 1.500; }
    .search input { flex: 1; height: 9px; }
    .search input::placeholder { color: #939ba7; opacity: 1; }
    .tree { display: grid; grid-template-columns: 1fr 4px; min-height: 0; }
    ul { list-style: none; margin: 0; padding: 0; display: grid; grid-auto-rows: minmax(0, 1fr); overflow: hidden; min-width: 0; }
    li { display: flex; align-items: center; gap: 1px; white-space: nowrap; overflow: hidden; min-height: 0; }
    .l1 { padding-left: 8px; } .l2 { padding-left: 15px; } .l3 { padding-left: 22px; } .l5 { padding-left: 41px; }
    li.cur { background: #2f3744; font-weight: bold; color: #fff; }
    .tg { width: 8px; height: 8px; display: grid; place-items: center; flex: none; }
    .tg svg { width: 5px; height: 5px; stroke: #b5bcc6; fill: none; }
    .sw { width: 8px; height: 8px; flex: none; border: 1px solid #7d8590; background: #dcdee0; }
    .sw.b { background: #8fc3ea; }
    li .pg { width: 8px; height: 7px; flex: none; }
    .tb { background: #333b48; display: flex; flex-direction: column; align-items: center; padding: 4px 0; color: #9da5b1; }
    .tb i { width: 2px; flex: 107; background: #5c6573; order: 2; }
    .tb::before { content: ""; flex: 222; order: 1; }
    .tb::after { content: ""; flex: 190; order: 3; }
    .tb .down { order: 4; }
    .status { background: #3b4453; border-top: 1px solid #2f3643; display: grid; grid-template-columns: 748px 110px 1fr auto; align-items: center; padding: 0 26px 0 1px; line-height: 8px; }
    .status svg { width: 9px; height: 8px; fill: #cdd3da; stroke: none; }
    .status div { display: flex; gap: 7px; align-items: center; }
    .status div:last-child { gap: 2px; }
    .dimt { color: #747c89; }
    .brand { position: absolute; right: 8px; top: 10px; width: 116px; height: 54px; }
    .b1 { font: bold 8px "Liberation Sans", Arial, sans-serif; fill: #47434c; }
    .b2 { font: 900 16px "Lato", "Liberation Sans", sans-serif; fill: #1cc795; stroke: #1cc795; stroke-width: 1; }
    .b3 { font: 18px "Lato", "Liberation Sans", sans-serif; fill: #47434c; }
  `;

  private q(label: string, w: number, body: unknown, cls = "") {
    return html`<button class=${cls} aria-label=${label} style="width:${w}px"><svg viewBox="0 0 10 10">${body}</svg></button>`;
  }

  private quick() {
    const c = html`<i class="caret"></i>`;
    return html`<div class="quick">
      <span class="logo">R</span>
      ${this.q("Home", 9, svg`<path d="M1 1h8v8H1z" opacity=".5"/><path d="M1 1h8v2H1zM5 4h3v2H5zM5 7h3v1H5zM2 4h2v4H2z"/>`)}
      ${this.q("Open", 10, svg`<path d="M0 2h4l1 1h3v1H3L1 8H0z"/><path d="M3 5h7L8 9H1z"/>`)}
      ${this.q("Save", 9, svg`<path fill-rule="evenodd" d="M1 1h8v8H1zM3 1.500v2.500h4V1.500zM2.500 6v3h5V6z"/>`)}
      ${this.q("Sync", 9, svg`<circle cx="3" cy="6" r="3"/><path d="M5 2l4-1v4M5 6h4v3z"/>`, "dim")}${c}
      ${this.q("Undo", 8, svg`<path d="M0 4l4-3v2h3q3 0 3 4-1-2-3-2H4v2z"/>`, "dim")}${c}
      ${this.q("Redo", 8, svg`<path d="M10 4L6 1v2H3Q0 3 0 7q1-2 3-2h3v2z"/>`, "dim")}${c}
      ${this.q("Print", 9, svg`<path d="M2 0h6v3H2zM0 3h10v4H8V5H2v2H0zM2 6h6v4H2z"/>`)}
      ${this.q("PDF", 8, svg`<path d="M1 1h6l2 2v7H1z" fill="#e8d9da"/><path d="M3 4h6v5H3z" fill="#c9545c"/>`)}
      <i class="bar"></i>
      ${this.q("Align", 10, svg`<path d="M1 1h1v8H1zM8 1h1v8H8zM2 3h6v1H2zM4 5h3v3H4z"/>`, "box")}
      ${this.q("Measure", 9, svg`<path d="M0 4h10v4H0z" fill="#e0cf9d"/><path d="M0 2h10v1H0z"/>`)}${c}
      ${this.q("Dimension", 8, svg`<path d="M0 1l2-1 2 3 4 4 2 1-2 2-2-3-4-4z" fill="#8ecbe8"/>`)}
      ${this.q("Tag", 8, svg`<circle cx="6" cy="4" r="3" fill="none" stroke="#cfd4da" stroke-width="1.400"/><path d="M4 6l-3 4M5 4h2"/>`)}
      <b>A</b>
      <i class="bar"></i>
      ${this.q("3D view", 8, svg`<path d="M0 5l5-5 5 5v1H9v4H6V7H4v3H1V6H0z"/>`)}${c}
      ${this.q("Section", 7, svg`<path d="M5 1l4 4-4 4-4-4z" fill="none" stroke="#8e96a2" stroke-width="1.300"/>`)}
      ${this.q("Thin lines", 10, svg`<path d="M1 1h3v2H1zM1 4h3v2H1zM1 7h3v2H1zM5 1.500h4v1H5zM5 4.500h4v1H5zM5 7.500h4v1H5z"/>`, "box")}
      <i class="bar"></i>
      ${this.q("Close inactive", 9, svg`<path d="M0 1h6v6H0z" opacity=".6"/><path d="M4 3h5v6H4z"/><path d="M5 5l4 4M9 5L5 9" stroke="#d0555d" stroke-width="1.300"/>`)}
      ${this.q("Switch windows", 7, svg`<path d="M0 2l4 3-4 3zM5 2l4 3-4 3z"/>`)}
    </div>`;
  }

  private ribbon() {
    const c = html`<i class="caret"></i>`;
    return html`<section class="ribbon">
      <div class="select"><button class="modify"><svg viewBox="0 0 16 16">${ICONS.arrow}</svg>Modify</button><button class="foot">Select <i class="caret"></i></button></div>
      ${GROUPS.map((g) => html`<div class="group"><div class="tools">${g.tools.map(([l, w, ic, more, live]) => {
        const two = l.includes(" ");
        return html`<button class=${classMap({ tool: true, live: !!live })} style="width:${w}px"><svg viewBox="0 0 16 16">${ICONS[ic]}</svg><span>${l.replace(" ", "\n")}${more && two ? c : nothing}</span>${more && !two ? c : nothing}</button>`;
      })}</div>
        <div class="foot">${g.title} ${g.more ? c : nothing}</div></div>`)}
    </section>`;
  }

  private prop(p: Prop, i: number) {
    if (p.kind === "head") return html`<tr class="head"><th>${p.k}</th><td class="end">˄</td></tr>`;
    const id = "p" + i;
    let v: unknown = p.v ?? nothing;
    if (p.kind === "edit") v = html`<button class="edit" aria-labelledby=${id}>Edit...</button>`;
    if (p.kind === "check") v = html`<input type="checkbox" aria-labelledby=${id} .checked=${!!p.on} ?disabled=${!!p.dim} />`;
    if (p.kind === "text" || p.kind === "browse") v = html`<input type="text" aria-labelledby=${id} .value=${p.v ?? ""} />`;
    return html`<tr class=${p.dim ? "dim" : ""}><th id=${id}>${p.k}</th><td>${v}</td><td class="end">${p.kind === "browse" ? html`<button class="browse" aria-label="Browse"></button>` : nothing}</td></tr>`;
  }

  private node([l, m, t]: Node) {
    const s = m[0] === "+" ? svg`<path d="M0 2.500h5M2.500 0v5"/>` : m[0] === "-" ? svg`<path d="M0 2.500h5"/>` : nothing;
    return html`<li class="l${l} ${t.startsWith("KT1-004") ? "cur" : ""}">
      ${l === 5 ? html`<i class="sw ${m}"></i>` : html`<span class="tg"><svg viewBox="0 0 5 5">${s}</svg></span>`}
      ${m.length > 1 ? (m[1] === "s" ? sheetIcon : html`<svg class="pg" viewBox="0 0 16 12"><path d="M0 0h16v12H0z"/><path d="M0 3h16M5 3v9M10 3v9M0 7h16" stroke="#555e6b"/></svg>`) : nothing}
      <span>${t}</span></li>`;
  }

  render() {
    return html`
      <header class="top">
        ${this.quick()}
        <span class="doc">Autodesk Revit 2024 - Educational Version - PHỤNG HOUSE - KT-R3 - Sheet: KT1-004 - PHỐI CẢNH MẶT BẰNG TẦNG 1</span>
        <div class="acct">
          <button aria-label="Search help"><svg viewBox="0 0 8 8"><path d="M1 7V4l1-3h1v6zM7 7V4L6 1H5v6zM3 4h2" fill="#dfe3e8"/></svg></button>
          <button><svg viewBox="0 0 8 8"><circle cx="4" cy="2.500" r="1.500" fill="#dfe3e8"/><path d="M1 7q0-2 3-2t3 2z" fill="#dfe3e8"/></svg>Sign In</button>
          <i class="gap"></i><i class="caret"></i>
          <button aria-label="Store"><svg viewBox="0 0 8 8"><path d="M0 1h1.500l1 4H7l1-3H2"/><circle cx="3" cy="7" r=".5"/><circle cx="6" cy="7" r=".5"/></svg></button>
          <button aria-label="Help"><svg viewBox="0 0 8 8"><circle cx="4" cy="4" r="3.500" fill="#e6e9ed"/><path d="M3 3q1-1.500 2 0L4 4.500V6" stroke="#2a5b9c"/></svg><i class="caret"></i></button>
          <i class="gap"></i>
          <button aria-label="Minimise"><svg viewBox="0 0 8 8"><path d="M2 6h4"/></svg></button>
          <button aria-label="Restore"><svg viewBox="0 0 8 8"><path d="M1 3h5v4H1zM3 3V1h5v4H6"/></svg></button>
          <button aria-label="Close"><svg viewBox="0 0 8 8"><path d="M1 1l6 6M7 1L1 7"/></svg></button>
        </div>
      </header>
      <nav class="tabs"><button class="file">File</button><button class="on">Architecture</button>${TABS.map((t) => html`<button>${t}</button>`)}<button class="gold">ATool</button><button>Modify</button><span class="cam"><i></i><b class="caret"></b></span></nav>
      ${this.ribbon()}
      <div class="options"></div>
      <main class="main">
        <section class="props">
          <div class="bar-title"><span>Properties</span><button class="x" aria-label="Close properties">×</button></div>
          <div class="type"><span class="thumb">${sheetIcon}</span><span>Sheet</span><i class="caret"></i></div>
          <div class="filter"><label><select aria-label="Instance"><option>Sheet: PHỐI CẢNH MẶT BẰNG TẦNG 1</option></select><i class="caret"></i></label><button><svg viewBox="0 0 6 6"><path d="M0 0h2.500v2.500H0zM3 0h3v6H3zM0 3h2.500v3H0z"/></svg>Edit Type</button></div>
          <table class="ptable"><tbody>${PROPS.map((p, i) => this.prop(p, i))}</tbody></table>
          <div class="help"><a href="#help">Properties help</a><button>Apply</button></div>
        </section>
        <section class="view">
          <div class="vtabs">
            <button>${sheetIcon}KT1-006 - PHỐI CẢNH MẶT BẰNG...</button><button>${sheetIcon}KC-02 - GHI CHÚ CHUNG - 1</button><button>${sheetIcon}KT1-015 - MẶT BẰNG LÁT SÀN TẦ...</button><button class="on">${sheetIcon}KT1-004 - PHỐI CẢNH MẶT BẰN...<span class="x">×</span></button><i class="caret"></i>
          </div>
          <div class="canvas">
            <div class="sheet"><div class="inner"><plan-drawing></plan-drawing><title-block></title-block></div></div>
            <span class="mark m1">BanVeNhaDep.vn</span><span class="mark m2">BanVeNhaDep.vn</span><span class="mark m3">Bản quyền © BanVeNhaDep.vn</span>
            <div class="nav"><i class="nub"></i><svg viewBox="0 0 14 14"><circle cx="6.500" cy="6.500" r="5.500"/><circle cx="6.500" cy="6.500" r="3"/><path d="M9 10h4v3H9z" fill="#8fb5cf"/></svg><i class="caret"></i><svg viewBox="0 0 14 14"><path d="M2 2h8v7H2z" fill="#a5c596" stroke="#86a878"/><circle cx="9.500" cy="9" r="2.200" fill="#fff"/><path d="M11 11l2 2"/></svg><i class="caret"></i><i class="nub"></i></div>
          </div>
          <div class="vs"><i class="chev"></i><i class="thumby"></i><i class="chev down"></i></div>
          <div class="hs"><span><svg viewBox="0 0 8 7"><path d="M0 5l2-3h5L6 5zM2 5v1h3V5z"/></svg><svg viewBox="0 0 8 7"><path d="M4 0l2.500 2L5 4v3H3V4L1.500 2z" fill="#8fdcea"/></svg><i class="chev left"></i></span><i class="thumbx"></i><i class="chev right"></i></div>
        </section>
        <aside class="browser">
          <div class="bar-title"><span>Project Browser - PHỤNG HOUSE - KT-R3</span><button class="x" aria-label="Close browser">×</button></div>
          <label class="search"><svg viewBox="0 0 10 10"><circle cx="4" cy="4" r="3.200"/><path d="M6.500 6.500L10 10"/></svg><input type="text" placeholder="Search" aria-label="Search" /></label>
          <div class="tree"><ul>${TREE.map((n) => this.node(n))}</ul><div class="tb"><span class="chev"></span><i></i><span class="chev down"></span></div></div>
        </aside>
      </main>
      <footer class="status">
        <span>Click to select, TAB for alternates, CTRL adds, SHIFT unselects.</span>
        <div><svg viewBox="0 0 9 8"><path d="M1 1h4v6H1z" fill="#8ed0c0"/><path d="M4 3h4v5H4z"/></svg></div>
        <div><svg viewBox="0 0 9 8"><path d="M0 5l3-1V1h3v4h3v3H1z" opacity=".6"/></svg><svg viewBox="0 0 9 8"><path d="M1 0h7v8H1z"/><path d="M2 2h5M2 4h5" stroke="#555"/></svg><svg viewBox="0 0 9 8"><path d="M1 0h7v8H1z" opacity=".6"/><path d="M2 2h5M2 4h5" stroke="#555"/></svg><span class="dimt">Main Model</span></div>
        <div>${["M0 1h6v2H2v1zM6 3l2 5-2-1z", "M0 4l3-3h5L7 3H4v3zM6 4l2 4-2-1z", "M2 0h3v3h3L4 5zM5 4l3 4-3-1z", "M1 2l4-2v6l-4 2zM6 4l2 4H5z", "M0 3h5V1l3 3-3 3V5H0zM6 5l2 3H5z", "M4.500 1a3 3 0 100 6 3 3 0 000-6zm0 1a2 2 0 110 4 2 2 0 010-4z", "M0 0h9L5.500 4v4h-2V4z"].map((d) => html`<svg viewBox="0 0 9 8"><path d=${d} /></svg>`)}<span>:0</span></div>
      </footer>
      <svg class="brand" viewBox="0 0 116 54" role="img" aria-label="BẢN VẼ NHÀ ĐẸP">
        <path d="M5 20h31l14-15 3-4h7l3 6 17 18h29q5 0 6 5v9q-1 5-6 6l-3 8H5q-3 0-3-3V23q0-3 3-3z" fill="#fff"/>
        <path d="M38 46V25l15-14 4 4-13 12v19z" fill="#2fd09c"/><path d="M51 6l5-3 8 8-5 5z" fill="#27bd8a"/>
        <path d="M42 46V29l18-17 17 17v17h-4V31L60 19 46 31v11h25v4z" fill="#4b4751"/><path d="M47 40V32l13-12 12 12v10H47z" fill="#5b5661"/><path d="M50 41v-9l9-8 10 8v9z" fill="#fff"/><path d="M59 20l11 10 3 12 3 4V30L60 15z" fill="#35313b"/>
        <text class="b1" x="5" y="28">BẢN VẼ</text><text class="b2" x="6" y="47">NH</text><text class="b3" x="77" y="46">ĐẸP</text>
        <path d="M5 50.500h104" stroke="#2fc79a"/>
      </svg>`;
  }
}
